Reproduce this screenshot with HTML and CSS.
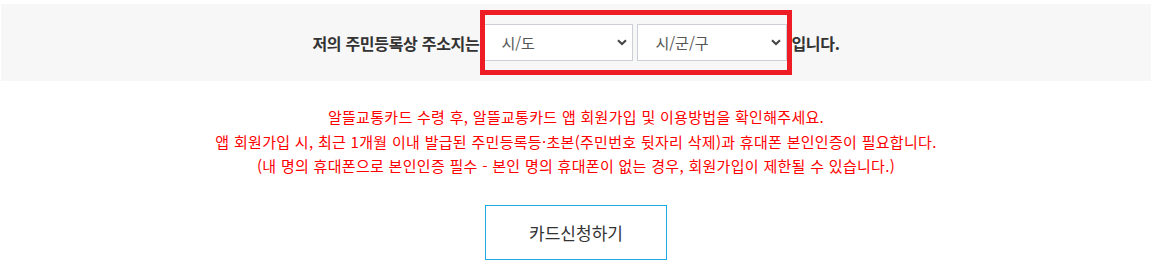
FILE: index.html
```html
<!DOCTYPE html>
<html lang="ko">
<head>
<meta charset="utf-8">
<title>카드신청</title>
<link rel="stylesheet" href="styles.css">
</head>
<body>
<div class="wrap">
  <div class="addr-bar">
    <span class="addr-label">저의 주민등록상 주소지는</span>
    <select class="addr-select"><option>시/도</option></select>
    <select class="addr-select"><option>시/군/구</option></select>
    <span class="addr-label">입니다.</span>
    <div class="highlight"></div>
  </div>
  <div class="notice">
    <p>알뜰교통카드 수령 후, 알뜰교통카드 앱 회원가입 및 이용방법을 확인해주세요.</p>
    <p>앱 회원가입 시, 최근 1개월 이내 발급된 주민등록등·초본(주민번호 뒷자리 삭제)과 휴대폰 본인인증이 필요합니다.</p>
    <p>(내 명의 휴대폰으로 본인인증 필수 - 본인 명의 휴대폰이 없는 경우, 회원가입이 제한될 수 있습니다.)</p>
  </div>
  <div class="actions">
    <button class="apply-btn" type="button">카드신청하기</button>
  </div>
</div>
</body>
</html>
```
FILE: styles.css
```css
html, body {
  margin: 0;
  padding: 0;
  background: #fff;
}
body {
  font-family: "Noto Sans CJK KR", "Noto Sans", sans-serif;
  color: #333;
}
.wrap {
  width: 1150px;
  margin: 4px 0 0 1px;
}
.addr-bar {
  position: relative;
  height: 77px;
  background: #f7f7f7;
  display: flex;
  align-items: center;
  justify-content: center;
  gap: 4px;
}
.addr-label {
  font-size: 16px;
  font-weight: 700;
  color: #333;
  letter-spacing: -0.3px;
}
.addr-select {
  appearance: none;
  -webkit-appearance: none;
  width: 150px;
  height: 37px;
  margin: 0;
  padding: 0 30px 0 17px;
  border: 1px solid #ccd0d6;
  border-radius: 0;
  background: #fff url("data:image/svg+xml;utf8,<svg xmlns='http://www.w3.org/2000/svg' width='10' height='7' viewBox='0 0 10 7'><path d='M1 1.2 L5 5 L9 1.2' fill='none' stroke='%23444' stroke-width='2'/></svg>") no-repeat right 5px center;
  font-family: "Noto Sans CJK KR", "Noto Sans", sans-serif;
  font-size: 15px;
  color: #555;
}
.highlight {
  position: absolute;
  left: 479px;
  top: 6px;
  width: 302px;
  height: 55px;
  border: 5px solid #ee1c25;
  pointer-events: none;
}
.notice {
  margin-top: 24px;
  text-align: center;
  color: #f00;
  font-size: 15px;
  letter-spacing: 0.3px;
  line-height: 24.5px;
}
.notice p {
  margin: 0;
}
.actions {
  margin-top: 26px;
  display: flex;
  justify-content: center;
}
.apply-btn {
  width: 182px;
  height: 55px;
  border: 1px solid #1ea9e3;
  background: #fff;
  font-family: "Noto Sans CJK KR", "Noto Sans", sans-serif;
  font-size: 17px;
  color: #333;
  cursor: pointer;
}
```
